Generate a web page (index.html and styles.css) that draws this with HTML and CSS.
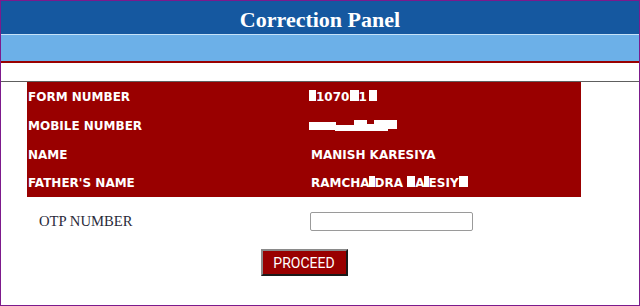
FILE: index.html
```html
<!DOCTYPE html>
<html lang="en">
<head>
    <meta charset="UTF-8">
    <title>Correction Panel</title>
    <link rel="stylesheet" href="styles.css">
</head>
<body>
<div class="page">
    <div class="title_bar">
        <h1 class="title">Correction Panel</h1>
    </div>
    <div class="sub_bar"></div>
    <div class="gap_bar"></div>

    <div class="details">
        <div class="label">FORM NUMBER</div>
        <div class="value"><span><span class="blot b1"></span>1070<span class="blot b2"></span>1<span class="blot b3"></span></span></div>

        <div class="label">MOBILE NUMBER</div>
        <div class="value">
            <svg class="scribble" width="90" height="12" viewBox="0 0 90 12">
                <rect x="0" y="2" width="27" height="8" fill="#fff"/>
                <rect x="26" y="5" width="20" height="6" fill="#fff"/>
                <rect x="45" y="0" width="13" height="11" fill="#fff"/>
                <rect x="57" y="4" width="9" height="7" fill="#fff"/>
                <rect x="65" y="0" width="14" height="11" fill="#fff"/>
                <rect x="78" y="0" width="10" height="9" fill="#fff"/>
            </svg>
        </div>

        <div class="label">NAME</div>
        <div class="value"><span>MANISH KARESIYA</span></div>

        <div class="label">FATHER'S NAME</div>
        <div class="value"><span>RAMCHA<span class="blot b4"></span>DRA <span class="blot b5"></span>A<span class="blot b6"></span>ESIY<span class="blot b7"></span></span></div>
    </div>

    <div class="otp">
        <label class="otp_label" for="otp">OTP NUMBER</label>
        <div><input class="otp_input" id="otp" type="text"></div>
    </div>

    <div class="actions">
        <button class="proceed" type="button">PROCEED</button>
    </div>
</div>
</body>
</html>
```

FILE: styles.css
```css
body {
    margin: 0;
}
.page {
    width: 640px;
    height: 306px;
    box-sizing: border-box;
    border: 1px solid #7d1a8c;
    background-color: #fff;
    overflow: hidden;
}
.title_bar {
    height: 28px;
    padding-top: 5px;
    background-color: #1558a0;
}
.title {
    margin: 0;
    font-family: "Liberation Serif", serif;
    font-size: 22px;
    font-weight: bold;
    line-height: 28px;
    color: #fff;
    text-align: center;
}
.sub_bar {
    height: 26px;
    border-top: 1px solid #c6e2f8;
    border-bottom: 2px solid #990000;
    background-color: #6cb0e8;
}
.gap_bar {
    height: 18px;
    border-bottom: 1px solid #5e5e5e;
}
.details {
    display: grid;
    grid-template-columns: 283px 1fr;
    grid-template-rows: repeat(4, 28.67px);
    width: 554px;
    height: 115px;
    margin-left: 26px;
    background-color: #990000;
    font-family: "DejaVu Sans", Verdana, sans-serif;
    font-size: 12px;
    font-weight: bold;
    color: #fff;
}
.label,
.value {
    display: flex;
    align-items: center;
    padding: 2px 0 0 1px;
    white-space: nowrap;
}
.blot {
    display: inline-block;
    height: 11px;
    background-color: #fff;
    position: relative;
    top: 0;
}
.b1 { width: 7px; margin-left: -2px; }
.b2 { width: 9px; margin-left: 1px; margin-right: -1px; }
.b3 { width: 8px; margin-left: 2px; }
.b4 { width: 6px; margin-left: -1px; }
.b5 { width: 8px; }
.b6 { width: 5px; margin-left: -1px; }
.b7 { width: 9px; }
.scribble {
    display: block;
    margin-left: -2px;
}
.otp {
    display: grid;
    grid-template-columns: 283px 1fr;
    align-items: center;
    width: 554px;
    margin: 15px 0 0 26px;
}
.otp_label {
    padding-left: 12px;
    font-family: "Liberation Serif", serif;
    font-size: 14.67px;
    color: #2a2a3a;
}
.otp_input {
    display: block;
    width: 163px;
    height: 19px;
    box-sizing: border-box;
    margin: 0;
    border: 1px solid #9a9a9a;
    border-radius: 2px;
    background-color: #fff;
}
.actions {
    display: flex;
    justify-content: center;
    width: 554px;
    margin: 18px 0 0 26px;
}
.proceed {
    width: 87px;
    height: 27px;
    padding: 0;
    border: 2px solid;
    border-color: #8a8a8a #1a1a1a #1a1a1a #8a8a8a;
    background-color: #990000;
    font-family: Roboto, "Liberation Sans", sans-serif;
    font-size: 14px;
    color: #fff;
}
```
